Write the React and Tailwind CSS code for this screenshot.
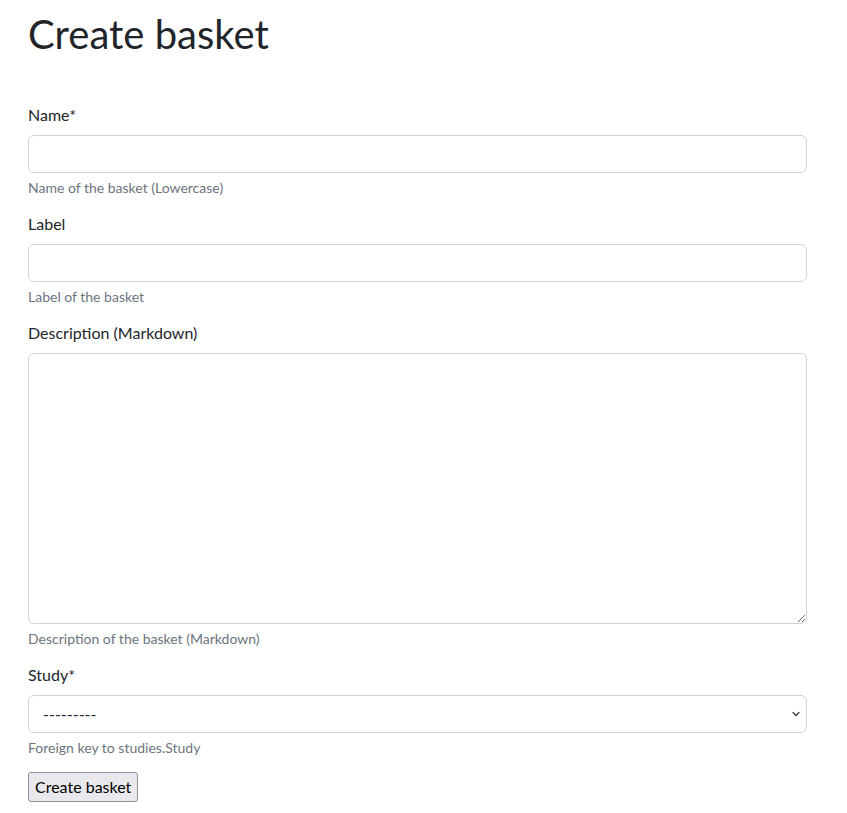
export default function App() {
    const font = { fontFamily: '"Segoe UI", Lato, sans-serif' };
    return (
        <div className="min-h-screen bg-white text-[#212529] px-[28px] pt-[10px]" style={font}>
            <h1 className="text-[40px] leading-[1.2] font-normal mb-[45px]">Create basket</h1>

            <form className="w-[779px]" onSubmit={e => e.preventDefault()}>
                {/* Name */}
                <div className="mb-[14px]">
                    <label className="block text-base leading-6 mb-2">Name*</label>
                    <input
                        type="text"
                        className="block w-full h-[38px] px-3 text-base border border-[#ced4da] rounded-[6px] bg-white outline-none"
                    />
                    <div className="mt-1 text-[14px] leading-[21px] text-[#6c757d]">Name of the basket (Lowercase)</div>
                </div>

                {/* Label */}
                <div className="mb-[14px]">
                    <label className="block text-base leading-6 mb-2">Label</label>
                    <input
                        type="text"
                        className="block w-full h-[38px] px-3 text-base border border-[#ced4da] rounded-[6px] bg-white outline-none"
                    />
                    <div className="mt-1 text-[14px] leading-[21px] text-[#6c757d]">Label of the basket</div>
                </div>

                {/* Description */}
                <div className="mb-[14px]">
                    <label className="block text-base leading-6 mb-2">Description (Markdown)</label>
                    <textarea
                        className="block w-full h-[271px] px-3 py-1.5 text-base border border-[#ced4da] rounded-[6px] bg-white outline-none"
                    />
                    <div className="mt-1 text-[14px] leading-[21px] text-[#6c757d]">Description of the basket (Markdown)</div>
                </div>

                {/* Study */}
                <div className="mb-[14px]">
                    <label className="block text-base leading-6 mb-2">Study*</label>
                    <div className="relative">
                        <select className="block w-full h-[38px] pl-[14px] pr-9 text-base border border-[#ced4da] rounded-[6px] bg-white outline-none appearance-none">
                            <option>---------</option>
                        </select>
                        <svg className="absolute right-[6px] top-1/2 -translate-y-1/2 pointer-events-none" width="10" height="8" viewBox="0 0 16 16">
                            <path d="M2 5l6 6 6-6" fill="none" stroke="#343a40" strokeWidth="2.4" strokeLinecap="round" strokeLinejoin="round" />
                        </svg>
                    </div>
                    <div className="mt-1 text-[14px] leading-[21px] text-[#6c757d]">Foreign key to studies.Study</div>
                </div>

                <button
                    type="submit"
                    className="px-[6px] h-[30px] text-base text-black bg-[#e9e9ed] border border-[#8f8f9d] rounded-[3px]"
                >
                    Create basket
                </button>
            </form>
        </div>
    );
}
